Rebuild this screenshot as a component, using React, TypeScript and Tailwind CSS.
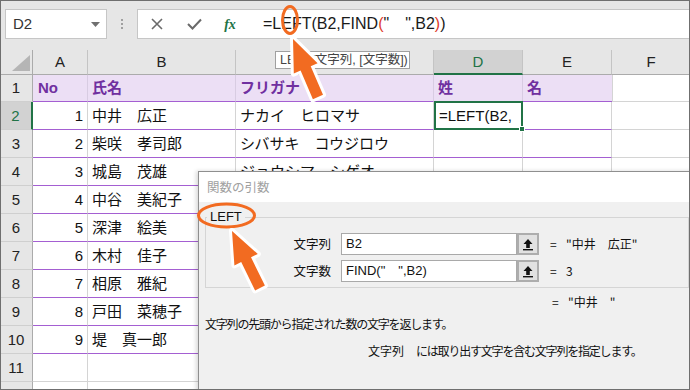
import React from "react";

const people: [string, string, string][] = [
  ["1", "中井　広正", "ナカイ　ヒロマサ"],
  ["2", "柴咲　孝司郎", "シバサキ　コウジロウ"],
  ["3", "城島　茂雄", "ジョウシマ　シゲオ"],
  ["4", "中谷　美紀子", "ナカタニ　ミキコ"],
  ["5", "深津　絵美", "フカツ　エミ"],
  ["6", "木村　佳子", "キムラ　ヨシコ"],
  ["7", "相原　雅紀", "アイハラ　マサキ"],
  ["8", "戸田　菜穂子", "トダ　ナホコ"],
  ["9", "堤　真一郎", "ツツミ　シンイチロウ"],
];

function UpBtn() {
  return (
    <div className="w-[22px] h-[22px] bg-[#e1e1e1] border-2 border-[#adadad] flex items-center justify-center">
      <svg width="12" height="13" viewBox="0 0 12 13">
        <path d="M6 1 L10.5 6 H7.8 V10 H4.2 V6 H1.5 Z" fill="#111" />
        <rect x="1" y="11" width="10" height="1.4" fill="#111" />
      </svg>
    </div>
  );
}

function DataRow({ n, a, b, c, selected }: { n: number; a: string; b: string; c: string; selected?: boolean }) {
  return (
    <div className="grid grid-cols-[33px_55px_148px_198px_89px_89px_1fr] h-[28px] text-[15px] leading-[20px] text-[#111]">
      <div
        className={
          selected
            ? "bg-[#d2d2d2] border-r-2 border-r-[#217346] border-b border-b-[#cfcfcf] flex items-center justify-center text-[#217346]"
            : "bg-[#e6e6e6] border-r border-r-[#ababab] border-b border-b-[#cfcfcf] flex items-center justify-center text-[#222]"
        }
      >
        {n}
      </div>
      <div className="border-r border-r-[#d4d4d4] border-b border-b-[#a45fd2] flex items-center justify-end pr-[4px]">{a}</div>
      <div className="border-r border-r-[#d4d4d4] border-b border-b-[#a45fd2] flex items-center pl-[4px]">{b}</div>
      <div className="border-r border-r-[#d4d4d4] border-b border-b-[#a45fd2] flex items-center pl-[4px]">{c}</div>
      {selected ? (
        <div className="relative border-2 border-[#217346] flex items-center pl-[3px] -mt-px">
          =LEFT(B2,
          <div className="absolute right-[-4px] bottom-[-4px] w-[6px] h-[6px] bg-[#217346] border border-white" />
        </div>
      ) : (
        <div className="border-r border-r-[#d4d4d4] border-b border-b-[#a45fd2]" />
      )}
      <div className="border-r border-r-[#d4d4d4] border-b border-b-[#a45fd2]" />
      <div className="border-b border-b-[#d4d4d4]" />
    </div>
  );
}

export default function App() {
  return (
    <div className="relative w-[690px] h-[390px] overflow-hidden bg-white font-['Liberation_Sans','Noto_Sans_CJK_JP',sans-serif]">
      {/* formula bar */}
      <div className="h-[50px] bg-[#e6e6e6] flex items-start pt-[9px] pl-[5px]">
        <div className="w-[102px] h-[30px] bg-white border border-[#c6c6c6] flex items-center justify-between pl-[7px] pr-[6px] text-[15px] text-[#333]">
          <span>D2</span>
          <svg width="9" height="5" viewBox="0 0 9 5">
            <path d="M0 0 H9 L4.5 5 Z" fill="#707070" />
          </svg>
        </div>
        <div className="w-[30px] h-[30px] flex flex-col items-center justify-center gap-[2px]">
          <div className="w-[2px] h-[2px] bg-[#a0a0a0]" />
          <div className="w-[2px] h-[2px] bg-[#a0a0a0]" />
          <div className="w-[2px] h-[2px] bg-[#a0a0a0]" />
        </div>
        <div className="flex-1 h-[30px] bg-white border border-[#c6c6c6] border-r-0 flex items-center">
          <div className="w-[38px] flex justify-center">
            <svg width="12" height="12" viewBox="0 0 12 12">
              <path d="M1 1 L11 11 M11 1 L1 11" stroke="#6a6a6a" strokeWidth="1.6" />
            </svg>
          </div>
          <div className="w-[36px] flex justify-center">
            <svg width="15" height="12" viewBox="0 0 15 12">
              <path d="M1 6 L5.5 10.5 L14 1.5" stroke="#6a6a6a" strokeWidth="2" fill="none" />
            </svg>
          </div>
          <div className="w-[36px] flex justify-center font-['Liberation_Serif',serif] italic text-[14px] text-[#217346] font-bold">
            fx
          </div>
          <div className="ml-[15px] text-[16px] text-[#1a1a1a] whitespace-pre">
            =LEFT(B2,FIND<span className="text-[#e03a2a]">(</span>"　",B2<span className="text-[#e03a2a]">)</span>)
          </div>
        </div>
      </div>

      {/* column header */}
      <div className="grid grid-cols-[33px_55px_148px_198px_89px_89px_1fr] h-[25px] bg-[#e6e6e6] text-[15px] text-[#222] leading-[20px]">
        <div className="relative border-r border-r-[#ababab] border-b border-b-[#ababab]">
          <svg className="absolute left-[12px] top-[5px]" width="18" height="16" viewBox="0 0 18 16">
            <path d="M18 0 V16 H0 Z" fill="#b5b5b5" />
          </svg>
        </div>
        <div className="border-r border-r-[#c4c4c4] border-b border-b-[#ababab] flex items-center justify-center">A</div>
        <div className="border-r border-r-[#c4c4c4] border-b border-b-[#ababab] flex items-center justify-center">B</div>
        <div className="border-r border-r-[#c4c4c4] border-b border-b-[#ababab] flex items-center justify-center">C</div>
        <div className="bg-[#d2d2d2] border-r border-r-[#c4c4c4] border-b-2 border-b-[#217346] flex items-center justify-center text-[#217346]">D</div>
        <div className="border-r border-r-[#c4c4c4] border-b border-b-[#ababab] flex items-center justify-center">E</div>
        <div className="border-b border-b-[#ababab] flex items-center justify-center">F</div>
      </div>

      {/* row 1 */}
      <div className="grid grid-cols-[33px_55px_148px_198px_89px_89px_1fr] h-[27px] text-[15px] leading-[20px] font-bold text-[#7030a0]">
        <div className="bg-[#e6e6e6] border-r border-r-[#ababab] border-b border-b-[#cfcfcf] flex items-center justify-center font-normal text-[#222]">1</div>
        <div className="bg-[#ecdff5] border-r border-r-[#d8cce2] border-b border-b-[#a45fd2] flex items-center pl-[5px]">No</div>
        <div className="bg-[#ecdff5] border-r border-r-[#d8cce2] border-b border-b-[#a45fd2] flex items-center pl-[4px]">氏名</div>
        <div className="bg-[#ecdff5] border-r border-r-[#d8cce2] border-b border-b-[#a45fd2] flex items-center pl-[4px]">フリガナ</div>
        <div className="bg-[#ecdff5] border-r border-r-[#d8cce2] border-b border-b-[#a45fd2] flex items-center pl-[4px]">姓</div>
        <div className="bg-[#ecdff5] border-b border-b-[#a45fd2] flex items-center pl-[4px]">名</div>
        <div className="border-b border-b-[#d4d4d4] border-l border-l-[#d4d4d4]" />
      </div>

      {people.map((p, i) => (
        <DataRow key={i} n={i + 2} a={p[0]} b={p[1]} c={p[2]} selected={i === 0} />
      ))}

      {[11, 12].map((n) => (
        <div key={n} className="grid grid-cols-[33px_55px_148px_198px_89px_89px_1fr] h-[28px] text-[15px] leading-[20px]">
          <div className="bg-[#e6e6e6] border-r border-r-[#ababab] border-b border-b-[#cfcfcf] flex items-center justify-center text-[#222]">{n}</div>
          <div className="border-r border-r-[#d4d4d4] border-b border-b-[#d4d4d4]" />
          <div className="border-r border-r-[#d4d4d4] border-b border-b-[#d4d4d4]" />
          <div className="border-r border-r-[#d4d4d4] border-b border-b-[#d4d4d4]" />
          <div className="border-r border-r-[#d4d4d4] border-b border-b-[#d4d4d4]" />
          <div className="border-r border-r-[#d4d4d4] border-b border-b-[#d4d4d4]" />
          <div className="border-b border-b-[#d4d4d4]" />
        </div>
      ))}

      {/* tooltip */}
      <div className="absolute left-[275px] top-[51px] w-[135px] h-[18px] pl-[4px] bg-white border border-[#a0a0a0] text-[12.5px] leading-[16px] text-[#444] whitespace-pre">
        LEFT(文字列, [文字数])
      </div>

      {/* dialog */}
      <div className="absolute left-[198px] top-[171px] w-[500px] h-[230px] bg-[#f0f0f0] border-l border-t border-[#8f8f8f] shadow-[-2px_0_4px_rgba(0,0,0,0.15)] text-[12px] text-[#111] font-['Noto_Sans_CJK_JP','Liberation_Sans',sans-serif]">
        <div className="h-[30px] bg-white flex items-center pl-[8px] text-[#a0a0a0] text-[12.5px]">関数の引数</div>
        <div className="pl-[6px] pr-[3px] pt-[6px]">
          <fieldset className="border border-[#d5d5d5] h-[80px] w-[484px]">
            <legend className="ml-[1px] px-[3px] text-[13px] leading-[18px] font-['Liberation_Sans',sans-serif] text-[#111]">LEFT</legend>
            <div className="flex flex-col gap-[5px] mt-[7px]">
              <div className="flex items-center h-[22px]">
                <div className="w-[126px] text-right pr-[1px] text-[12.5px]">文字列</div>
                <div className="ml-[9px] w-[176px] h-[22px] bg-white border border-[#a9a9a9] flex items-center pl-[4px] text-[13px] font-['Liberation_Sans','Noto_Sans_CJK_JP',sans-serif]">B2</div>
                <UpBtn />
                <div className="ml-[11px] w-[16px]">=</div>
                <div className="whitespace-pre">"中井　広正"</div>
              </div>
              <div className="flex items-center h-[22px]">
                <div className="w-[126px] text-right pr-[1px] text-[12.5px]">文字数</div>
                <div className="ml-[9px] w-[176px] h-[22px] bg-white border border-[#a9a9a9] flex items-center pl-[4px] text-[13px] whitespace-pre font-['Liberation_Sans','Noto_Sans_CJK_JP',sans-serif]">FIND("　",B2)</div>
                <UpBtn />
                <div className="ml-[11px] w-[16px]">=</div>
                <div>3</div>
              </div>
            </div>
          </fieldset>
          <div className="flex mt-[5px] h-[18px] items-center pl-[347px] whitespace-pre">
            <div className="w-[16px]">=</div>
            <div>"中井　"</div>
          </div>
          <div className="mt-[4px] h-[18px] flex items-center tracking-[-1.2px]">文字列の先頭から指定された数の文字を返します。</div>
          <div className="mt-[9px] h-[18px] flex items-center pl-[163px] whitespace-pre">
            <span>文字列</span>
            <span className="ml-[12px] tracking-[-1.2px]">には取り出す文字を含む文字列を指定します。</span>
          </div>
        </div>
      </div>

      {/* annotations */}
      <svg className="absolute left-0 top-0 pointer-events-none" width="690" height="390" viewBox="0 0 690 390">
        <ellipse cx="290" cy="20" rx="7.5" ry="13.5" fill="none" stroke="#f26b21" strokeWidth="3" />
        <polygon
          points="293,39 317.6,63.2 310.7,66.2 323,94.8 312.9,99.2 300.6,70.6 293.8,73.6"
          fill="#f26b21"
          stroke="#fff"
          strokeWidth="6"
          strokeLinejoin="round"
          paintOrder="stroke"
        />
        <ellipse cx="226.5" cy="215.5" rx="28" ry="11.5" fill="none" stroke="#f26b21" strokeWidth="3" />
        <polygon
          points="232,231 257.8,254 251,257.3 264.9,285.6 255.1,290.4 241.2,262.1 234.4,265.4"
          fill="#f26b21"
          stroke="#fff"
          strokeWidth="6"
          strokeLinejoin="round"
          paintOrder="stroke"
        />
      </svg>

      {/* frame */}
      <div className="absolute inset-0 border border-[#6f6f6f] pointer-events-none" />
    </div>
  );
}
